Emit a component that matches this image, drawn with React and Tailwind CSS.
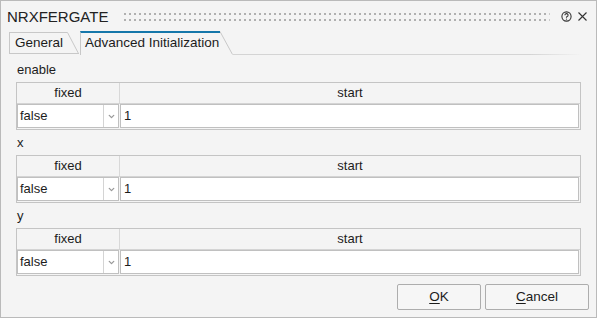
import { ChevronDown } from "lucide-react";

const sections = [
  { label: "enable", fixed: "false", start: "1" },
  { label: "x", fixed: "false", start: "1" },
  { label: "y", fixed: "false", start: "1" },
];

const Grip = () => (
  <svg className="flex-1 h-[9px] ml-[16px] mr-[11px]">
    <defs>
      <pattern id="grip" width="5" height="6" patternUnits="userSpaceOnUse">
        <rect x="0" y="1" width="2" height="2" fill="#b0b0b0" />
      </pattern>
    </defs>
    <rect width="100%" height="100%" fill="url(#grip)" />
  </svg>
);

const ParamTable = ({ row }) => (
  <div className="border border-[#c4c4c4] bg-[#f4f4f4]">
    <div className="grid grid-cols-[103px_1fr] h-[21px] border-b border-[#d4d4d4] text-[13px] leading-[20px] text-center">
      <div className="border-r border-[#d8d8d8]">fixed</div>
      <div>start</div>
    </div>
    <div className="flex h-[25px] pb-[1px]">
      <div className="w-[102px] flex border border-[#c0c0c0] bg-white">
        <div className="flex-1 pl-[2px] text-[13px] leading-[22px]">{row.fixed}</div>
        <div className="w-[15px] border-l border-[#d4d4d4] flex items-center justify-center">
          <ChevronDown size={9} strokeWidth={3.5} color="#999999" />
        </div>
      </div>
      <div className="flex-1 ml-[1px] mr-[1px] border border-[#c0c0c0] bg-white pl-[3px] text-[13px] leading-[22px]">
        {row.start}
      </div>
    </div>
  </div>
);

const App = () => {
  return (
    <div className="w-[597px] h-[318px] border border-[#bababa] bg-[#f4f4f4] flex flex-col font-['Liberation_Sans',Arial,sans-serif] text-[#1c1c1c]">
      <div className="h-[30px] flex items-center pl-[6px] pr-[9px] pt-[1px]">
        <span className="text-[15px] leading-[20px] text-[#222]">NRXFERGATE</span>
        <Grip />
        <svg width="11" height="11" viewBox="0 0 11 11" className="mr-[6px]">
          <circle cx="5.5" cy="5.5" r="4.6" fill="none" stroke="#333" strokeWidth="1.1" />
          <path d="M3.9 4.3 A1.6 1.6 0 1 1 5.9 5.8 L5.5 6.1 V6.8" fill="none" stroke="#333" strokeWidth="1.1" />
          <circle cx="5.5" cy="8.1" r="0.6" fill="#333" />
        </svg>
        <svg width="9" height="9" viewBox="0 0 9 9">
          <path d="M0.5 0.5 L8.5 8.5 M8.5 0.5 L0.5 8.5" stroke="#333" strokeWidth="1.1" />
        </svg>
      </div>

      <div className="flex items-start h-[24px] pl-[8px] pr-[15px]">
        <div className="flex mt-[1px] h-[22px]">
          <div className="border-l border-t border-b border-[#c8c8c8] pl-[5px] pr-[4px] text-[13.5px] leading-[20px] whitespace-nowrap">
            General
          </div>
          <svg width="12" height="22" className="block">
            <path d="M0 0.5 H0.5 L11.5 21.5" stroke="#c8c8c8" fill="none" />
            <path d="M0 21.5 H12" stroke="#c8c8c8" />
          </svg>
        </div>
        <div className="flex h-[24px] ml-[1px]">
          <div className="w-[140px] border-l border-[#c8c8c8] border-t-2 border-t-[#1577aa] pl-[4px] text-[13.5px] leading-[20px] whitespace-nowrap">
            Advanced Initialization
          </div>
          <svg width="13" height="24" className="block">
            <path d="M0 0.5 L12.5 23.5" stroke="#c8c8c8" fill="none" />
          </svg>
        </div>
        <div className="flex-1 h-[24px] border-b border-transparent [border-image:linear-gradient(to_right,#d4d4d4_85%,#f4f4f4)_1]"></div>
      </div>

      <div className="flex flex-col px-[15px] pt-[7px]">
        {sections.map((row, i) => (
          <div key={row.label} className={i > 0 ? "mt-[5px]" : ""}>
            <div className="h-[16px] pl-[1px] text-[13px] leading-[16px] mb-[4px]">{row.label}</div>
            <ParamTable row={row} />
          </div>
        ))}
      </div>

      <div className="flex justify-end gap-[4px] pr-[7px] mt-[8px]">
        <button className="w-[84px] h-[26px] border border-[#adadad] rounded-[2px] bg-[#f6f6f6] text-[13.5px]">
          <span className="underline underline-offset-2">O</span>K
        </button>
        <button className="w-[104px] h-[26px] border border-[#adadad] rounded-[2px] bg-[#f6f6f6] text-[13.5px]">
          <span className="underline underline-offset-2">C</span>ancel
        </button>
      </div>
    </div>
  );
};

export default App;
